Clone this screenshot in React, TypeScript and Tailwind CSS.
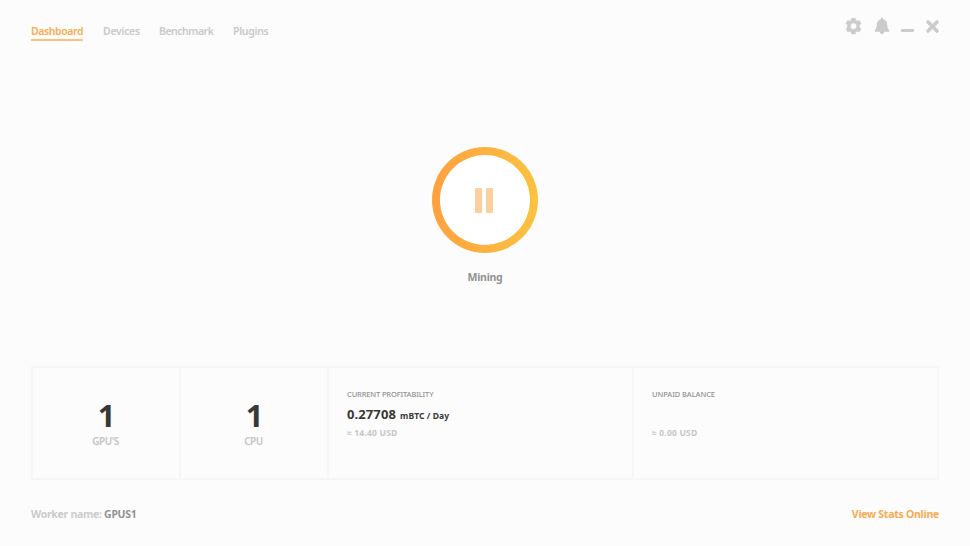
import React from 'react';

const tabs = [
  { label: 'Devices', style: 'ml-[20px] w-[36px] tracking-[-0.3px]' },
  { label: 'Benchmark', style: 'ml-[20px] w-[54px] tracking-[-0.48px]' },
  { label: 'Plugins', style: 'ml-[20px] w-[35px] tracking-[-0.3px]' },
];

function WindowControls() {
  return (
    <div className="-mr-[1px] flex h-[18px] items-center text-[#cbcbcb]">
      <svg width="17" height="18" viewBox="0 0 17 18" fill="currentColor" stroke="currentColor" strokeWidth="0.5" strokeLinejoin="round">
        <path
          fillRule="evenodd"
          d="M6.7 1.300h3.600l.5 2 1.400.8 2.100-.7 1.800 3.100-1.600 1.400v2.500l1.600 1.400-1.800 3.100-2.100-.7-1.400.8-.5 2H6.700l-.5-2-1.400-.8-2.100.7-1.800-3.100 1.600-1.400V7.900L.9 6.500l1.800-3.100 2.100.7 1.400-.8zM8.500 6.100a3.100 3.100 0 1 0 0 6.200 3.100 3.100 0 0 0 0-6.200z"
        />
      </svg>
      <svg className="ml-[12px]" width="16" height="18" viewBox="0 0 16 18" fill="currentColor">
        <path d="M8 .7c.7 0 1.200.5 1.200 1.200v.4c2.400.5 4 2.400 4 4.900 0 3.200.7 4.500 1.800 5.700.8.9.3 1.900-.8 1.900H1.800c-1.100 0-1.600-1-.8-1.900 1.100-1.200 1.800-2.500 1.800-5.700 0-2.500 1.600-4.400 4-4.900v-.4C6.800 1.200 7.300.7 8 .7zM5.900 14.700h4.200c0 1.500-1 2.500-2.100 2.500s-2.100-1-2.100-2.500z" />
      </svg>
      <span className="ml-[11px] mt-[8px] h-[3px] w-[13px] rounded-[1px] bg-[#cbcbcb]" />
      <svg className="ml-[11px]" width="15" height="15" viewBox="0 0 15 15" fill="none" stroke="currentColor" strokeWidth="3.6" strokeLinecap="round">
        <path d="M3 3l9 9M12 3l-9 9" />
      </svg>
    </div>
  );
}

function Count({ label }: { label: string }) {
  return (
    <div className="flex w-[148px] shrink-0 flex-col items-center border-r-2 border-[#f6f6f6] pt-[29px] pr-[1px]">
      <div className="h-[36px] pl-[2px] text-[31px] leading-[36px] font-bold text-[#383838]">1</div>
      <div className="mt-[1px] text-[10px] leading-[14px] font-semibold tracking-[-0.45px] text-[#c4c4c4]">{label}</div>
    </div>
  );
}

export default function App() {
  return (
    <div className="flex h-[546px] w-[970px] flex-col overflow-hidden bg-[#fcfcfc] px-[31px] pt-[17px] font-['Noto_Sans',sans-serif] whitespace-nowrap">
      <header className="flex h-[26px] items-start justify-between">
        <nav className="flex pt-[6px] text-[10.500px] leading-[16px] font-semibold text-[#c9c9c9]">
          <a className="h-[18px] w-[52px] border-b-2 border-[#fbc27d] tracking-[-0.42px] text-[#f8ac50]">Dashboard</a>
          {tabs.map((tab) => (
            <a key={tab.label} className={tab.style}>{tab.label}</a>
          ))}
        </nav>
        <WindowControls />
      </header>

      <main className="flex h-[323px] flex-col items-center pt-[104px]">
        <button aria-label="Pause mining" className="flex size-[106px] items-center justify-center rounded-full bg-linear-to-r from-[#fea13f] to-[#fbc23f]">
          <span className="flex size-[90px] items-center justify-center gap-[4px] rounded-full bg-white pr-[2px]">
            <span className="h-[25px] w-[7px] rounded-[1px] bg-[#fccf9f]" />
            <span className="h-[25px] w-[7px] rounded-[1px] bg-[#fccf9f]" />
          </span>
        </button>
        <div className="mt-[16px] text-[10.500px] leading-[16px] font-bold tracking-[-0.25px] text-[#929292]">Mining</div>
      </main>

      <section className="flex h-[114px] border-2 border-[#f6f6f6]">
        <Count label="GPU'S" />
        <Count label="CPU" />
        <div className="w-[305px] shrink-0 border-r-2 border-[#f6f6f6] pt-[20px] pl-[18px]">
          <div className="text-[7.500px] leading-[12px] font-medium tracking-[-0.13px] text-[#929292]">CURRENT PROFITABILITY</div>
          <div className="mt-[5px] flex h-[18px] items-baseline leading-[18px] font-bold text-[#383838]">
            <span className="w-[53px] text-[13px] tracking-[0.1px]">0.27708</span>
            <span className="text-[8.500px] tracking-[0.1px]">mBTC / Day</span>
          </div>
          <div className="mt-[4px] text-[8.500px] leading-[12px] font-bold tracking-[0.2px] text-[#c6c6c6]">≈ 14.40 USD</div>
        </div>
        <div className="grow pt-[20px] pl-[18px]">
          <div className="text-[7.500px] leading-[12px] font-medium tracking-[-0.08px] text-[#929292]">UNPAID BALANCE</div>
          <div className="mt-[27px] text-[8.500px] leading-[12px] font-bold tracking-[0.2px] text-[#c6c6c6]">≈ 0.00 USD</div>
        </div>
      </section>

      <footer className="mt-[26px] flex justify-between text-[10.500px] leading-[16px] font-bold">
        <div className="tracking-[-0.28px] text-[#cbcbcb]">Worker name: <span className="text-[#929292]">GPUS1</span></div>
        <a className="tracking-[-0.25px] text-[#f7aa50]">View Stats Online</a>
      </footer>
    </div>
  );
}
